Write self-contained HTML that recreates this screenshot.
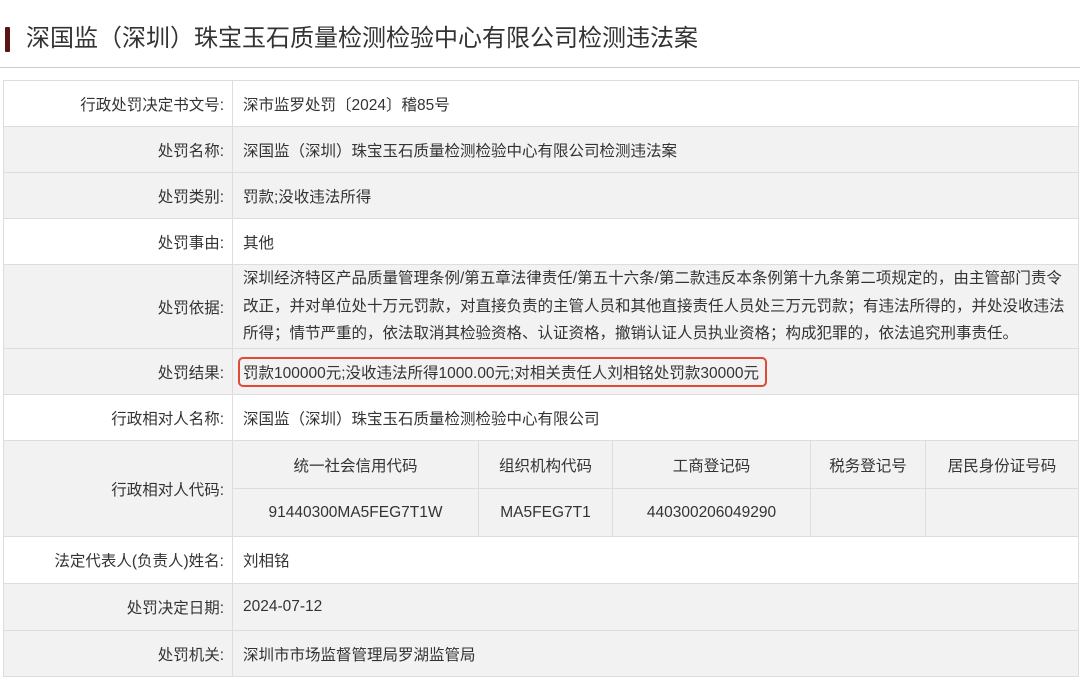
<!DOCTYPE html>
<html><head><meta charset="utf-8"><style>
*{margin:0;padding:0;box-sizing:border-box}
body{width:1080px;height:676px;background:#fff;font-family:"Liberation Sans","Noto Sans CJK SC",sans-serif;color:#333;position:relative;overflow:hidden}
.bar{position:absolute;left:5px;top:27px;width:5px;height:25px;background:#5a1414;border-radius:1px}
.title{position:absolute;left:26px;top:22px;font-size:24px;color:#333;line-height:34px;white-space:nowrap}
.hr{position:absolute;left:0;top:67px;width:1080px;height:1px;background:#ccc}
.c{position:absolute;border:1px solid #ddd;font-size:15.5px;display:flex;align-items:center;white-space:nowrap}
.l{justify-content:flex-end;padding-right:8px}
.v{padding-left:10px}
.m{justify-content:center}
.g{background:#f2f2f2}
</style></head><body>
<div class="bar"></div>
<div class="title">深国监（深圳）珠宝玉石质量检测检验中心有限公司检测违法案</div>
<div class="hr"></div>

<div class="c l" style="left:3px;top:80px;width:230px;height:47px">行政处罚决定书文号:</div>
<div class="c v" style="left:232px;top:80px;width:847px;height:47px">深市监罗处罚〔2024〕稽85号</div>

<div class="c l g" style="left:3px;top:126px;width:230px;height:47px">处罚名称:</div>
<div class="c v g" style="left:232px;top:126px;width:847px;height:47px">深国监（深圳）珠宝玉石质量检测检验中心有限公司检测违法案</div>

<div class="c l g" style="left:3px;top:172px;width:230px;height:47px">处罚类别:</div>
<div class="c v g" style="left:232px;top:172px;width:847px;height:47px">罚款;没收违法所得</div>

<div class="c l" style="left:3px;top:218px;width:230px;height:47px">处罚事由:</div>
<div class="c v" style="left:232px;top:218px;width:847px;height:47px">其他</div>

<div class="c l g" style="left:3px;top:264px;width:230px;height:85px">处罚依据:</div>
<div class="c v g" style="left:232px;top:264px;width:847px;height:85px;white-space:normal;line-height:27.5px;padding-right:4px">深圳经济特区产品质量管理条例/第五章法律责任/第五十六条/第二款违反本条例第十九条第二项规定的，由主管部门责令改正，并对单位处十万元罚款，对直接负责的主管人员和其他直接责任人员处三万元罚款；有违法所得的，并处没收违法所得；情节严重的，依法取消其检验资格、认证资格，撤销认证人员执业资格；构成犯罪的，依法追究刑事责任。</div>

<div class="c l g" style="left:3px;top:348px;width:230px;height:47px">处罚结果:</div>
<div class="c v g" style="left:232px;top:348px;width:847px;height:47px"><span style="position:absolute;left:5px;top:8px;width:529px;height:30px;border:2px solid #e04a36;border-radius:5px"></span><span style="margin-left:0px">罚款100000元;没收违法所得1000.00元;对相关责任人刘相铭处罚款30000元</span></div>

<div class="c l" style="left:3px;top:394px;width:230px;height:47px">行政相对人名称:</div>
<div class="c v" style="left:232px;top:394px;width:847px;height:47px">深国监（深圳）珠宝玉石质量检测检验中心有限公司</div>

<div class="c l g" style="left:3px;top:440px;width:230px;height:97px">行政相对人代码:</div>
<div class="c m g" style="left:232px;top:440px;width:247px;height:49px">统一社会信用代码</div>
<div class="c m g" style="left:478px;top:440px;width:135px;height:49px">组织机构代码</div>
<div class="c m g" style="left:612px;top:440px;width:199px;height:49px">工商登记码</div>
<div class="c m g" style="left:810px;top:440px;width:116px;height:49px">税务登记号</div>
<div class="c m g" style="left:925px;top:440px;width:154px;height:49px">居民身份证号码</div>
<div class="c m g" style="left:232px;top:488px;width:247px;height:49px">91440300MA5FEG7T1W</div>
<div class="c m g" style="left:478px;top:488px;width:135px;height:49px">MA5FEG7T1</div>
<div class="c m g" style="left:612px;top:488px;width:199px;height:49px">440300206049290</div>
<div class="c m g" style="left:810px;top:488px;width:116px;height:49px"></div>
<div class="c m g" style="left:925px;top:488px;width:154px;height:49px"></div>

<div class="c l" style="left:3px;top:536px;width:230px;height:48px">法定代表人(负责人)姓名:</div>
<div class="c v" style="left:232px;top:536px;width:847px;height:48px">刘相铭</div>

<div class="c l g" style="left:3px;top:583px;width:230px;height:48px">处罚决定日期:</div>
<div class="c v g" style="left:232px;top:583px;width:847px;height:48px">2024-07-12</div>

<div class="c l g" style="left:3px;top:630px;width:230px;height:47px">处罚机关:</div>
<div class="c v g" style="left:232px;top:630px;width:847px;height:47px">深圳市市场监督管理局罗湖监管局</div>
</body></html>
